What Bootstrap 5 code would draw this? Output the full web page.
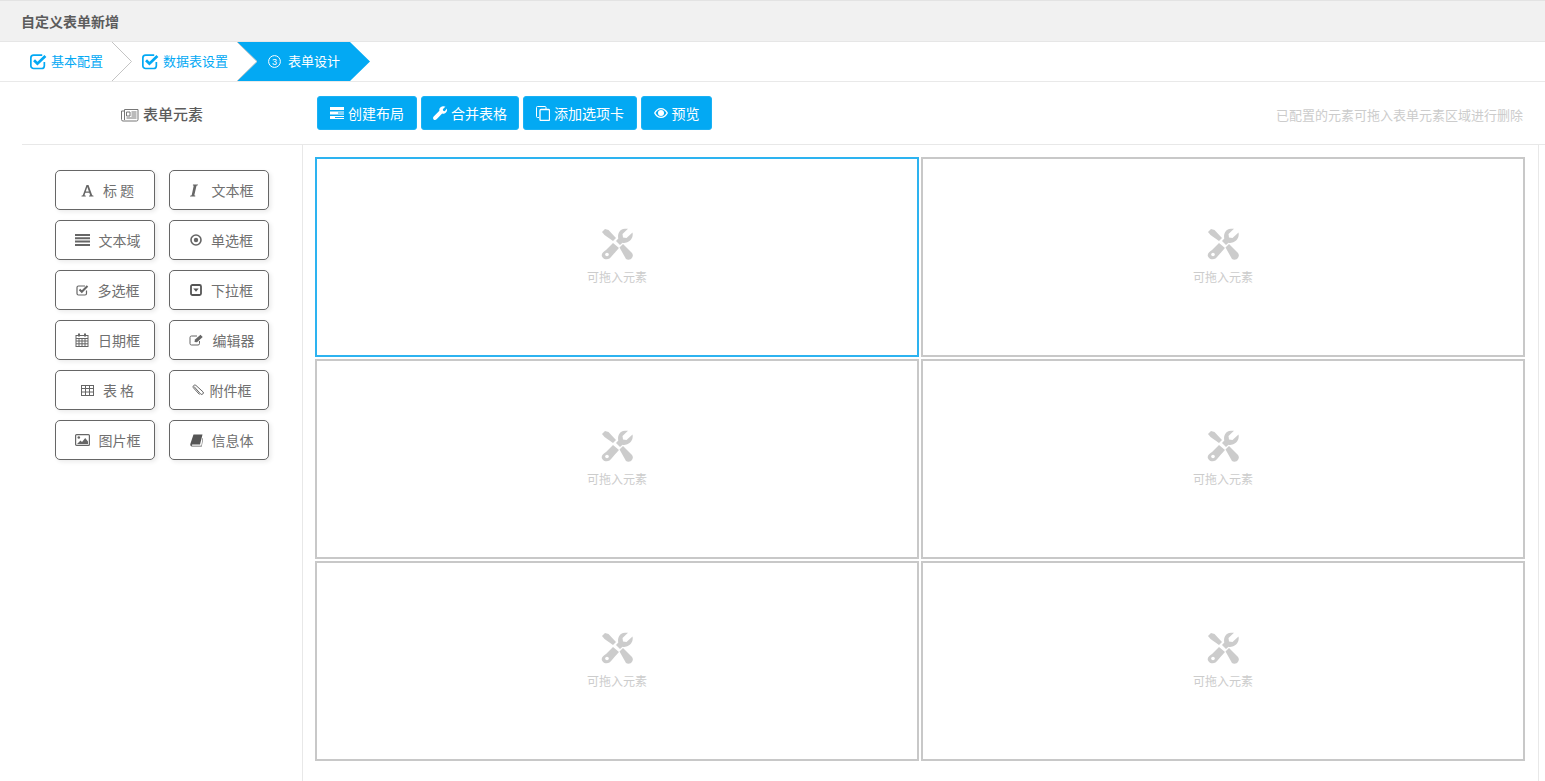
<!doctype html>
<html lang="zh">
<head>
<meta charset="utf-8">
<title>自定义表单新增</title>
<link rel="stylesheet" href="https://cdn.jsdelivr.net/npm/bootstrap@5.3.0/dist/css/bootstrap.min.css">
<style>
html,body{height:100%;overflow:hidden}
body{font-family:"Noto Sans CJK SC","Liberation Sans",sans-serif;color:#666;background:#fff;font-size:13px}
.pg-head{height:42px;background:#f1f1f1;border-top:1px solid #e3e3e3;border-bottom:1px solid #e6e6e6;padding-left:21px;font-size:14px;font-weight:700;color:#5c5c5c;line-height:41px}
.steps{height:40px;border-bottom:1px solid #e9e9e9}
.stp{position:relative;height:38px;font-size:13px;color:#03a9f4;gap:4px}
.stp-a{width:112px;padding-left:30px}
.stp-b{width:125px;padding-left:30px}
.stp-c{width:133px;padding-left:31px;color:#fff;gap:7px}
.stp-bg{position:absolute;left:0;top:0}
.stp>span,.stp>.ic{position:relative}
.tools{height:63px;border-bottom:1px solid #e8e8e8;margin-left:22px}
.ttl{width:295px;padding:3px 0 0 99px;font-size:15px;font-weight:500;color:#5c5c5c;gap:4px;border:0}
.tbtn{height:34px;border-radius:3px;background:#03a9f3;color:#fff;font-size:14px;padding:0;gap:4px;border:1px solid #1ab1f4}
.tbtn:hover{background:#03a9f3;color:#fff}
.hint{color:#ccc;font-size:13px;padding:3px 22px 0 0}
.work{height:636px;margin-left:22px}
.side{width:281px;border-right:1px solid #e8e8e8;padding:25px 0 0 33px}
.pal{display:grid;grid-template-columns:100px 100px;grid-auto-rows:40px;gap:10px 14px}
.pbtn{border:1px solid #666;border-radius:5px;box-shadow:2px 2px 4px rgba(0,0,0,.08);background:#fff;color:#707070;font-size:14px;padding:0 0 0 5px;gap:9px;line-height:1}
.pbtn:hover{background:#fff;color:#707070;border-color:#666}
.canvas{width:1236px;border-right:1px solid #e8e8e8;padding:12px 0 0 12px}
.cells{display:grid;grid-template-columns:604px 604px;grid-auto-rows:200px;gap:2px}
.cell{border:2px solid #c8c8c8;color:#ccc;font-size:12px;padding-top:69px}
.cell.on{border-color:#2db3f0}
.cell span{margin-top:8px;line-height:18px}
.ic{flex:none;display:block}
</style>
</head>
<body>
<svg width="0" height="0" class="position-absolute">
<defs>
<symbol id="chk" viewBox="0 0 16 16"><path d="M13.500 8.400v3.600A2.600 2.600 0 0 1 10.900 14.600H3.400A2.600 2.600 0 0 1 .8 12V4.600A2.600 2.600 0 0 1 3.400 2H11.500" fill="none" stroke="currentColor" stroke-width="1.600"/><path d="M3.800 6.800 7 10 14.500 2.800" fill="none" stroke="currentColor" stroke-width="2.600"/></symbol>
<symbol id="tool" viewBox="0 0 32 32"><path d="M1 4 4 1 7.500 2 15 10 12 13 3.500 7Z" fill="currentColor"/><path d="M12 15 5 22C2 24 0 26 1 28.500 2.500 31.500 6 32 8.500 30.500 9.500 30 16 22 18 20Z" fill="currentColor"/><circle cx="6" cy="26.500" r="1.800" fill="#fff"/><path d="M22 1C25 .5 27 .8 27 .8L21.500 6 22 9.500 25.500 10 31.500 4.500C32.500 9 30 13 25.500 14.500 24 15 22.500 15 21.500 14.700L19 17 15 13 17.300 10.500C16.300 6.500 18.500 2 22 1Z" fill="currentColor"/><path d="M18.500 19.500 22 16 31 25C32.300 27 32 29 30.500 30.500 29 32 26.500 32 25 31Z" fill="currentColor"/></symbol>
</defs>
</svg>

<div class="pg-head">自定义表单新增</div>

<div class="steps d-flex">
  <div class="stp stp-a d-flex align-items-center">
    <svg class="stp-bg" width="134" height="40" viewBox="0 0 134 40"><path d="M112 0 131.500 19.500 112 39" fill="none" stroke="#c4c4c4"/></svg>
    <svg class="ic" width="17" height="17"><use href="#chk"/></svg><span>基本配置</span>
  </div>
  <div class="stp stp-b d-flex align-items-center">
    <svg class="ic" width="17" height="17"><use href="#chk"/></svg><span>数据表设置</span>
  </div>
  <div class="stp stp-c d-flex align-items-center">
    <svg class="stp-bg" width="134" height="40" viewBox="0 0 134 40"><path d="M0 0H113L133 19.500 113 39H0L20 19.500Z" fill="#03a9f3"/><path d="M0 0 20 19.500 0 39" fill="none" stroke="#c8c8c8"/></svg>
    <svg class="ic" width="13" height="13" viewBox="0 0 13 13"><circle cx="6.500" cy="6.500" r="5.900" fill="none" stroke="#fff"/><text x="6.500" y="9.800" text-anchor="middle" fill="#fff" font-size="9" font-family="Liberation Sans">3</text></svg><span>表单设计</span>
  </div>
</div>

<div class="tools d-flex align-items-center">
  <div class="ttl d-flex align-items-center">
    <svg class="ic" width="18" height="14" viewBox="0 0 18 14"><path d="M3.500 1.500H17V11.500A1.500 1.500 0 0 1 15.500 13H2A1.500 1.500 0 0 1 .5 11.500V3H3.500Z" fill="none" stroke="#777"/><path d="M3.500 2V12" stroke="#777"/><path d="M5.500 4H9V8H5.500ZM10.500 4H15.500M10.500 6H15.500M10.500 8H15.500M5.500 10H15.500" fill="none" stroke="#777"/></svg>
    <span>表单元素</span>
  </div>
  <div class="d-flex gap-1 flex-grow-1 align-items-center">
    <button type="button" class="btn tbtn d-flex align-items-center justify-content-center" style="width:100px">
      <svg class="ic" width="14" height="12" viewBox="0 0 14 12" fill="#fff"><path d="M0 0H14V3H0ZM0 4.500H14V7.500H0ZM0 9H14V12H0Z"/><path d="M8 5.500H14V6.500H8ZM5 10H14V11H5Z" fill="#03a9f3"/></svg>创建布局</button>
    <button type="button" class="btn tbtn d-flex align-items-center justify-content-center" style="width:98px">
      <svg class="ic" width="14" height="14" viewBox="0 0 14 14" fill="#fff"><path d="M9.800.2C11 0 12 .3 12.500.6L9.800 3.200 10.200 4.800 11.700 5.200 14 2.500C14.400 4.500 13.600 6.800 11.500 7.500 10.600 7.800 9.800 7.700 9.200 7.500L3.600 13.300C2.700 14.200 1.400 14.200.6 13.400-.2 12.500-.1 11.200.7 10.400L6.400 4.800C5.800 2.500 7.500.5 9.800.2Z"/></svg>合并表格</button>
    <button type="button" class="btn tbtn d-flex align-items-center justify-content-center" style="width:114px">
      <svg class="ic" width="14" height="15" viewBox="0 0 14 15" fill="none" stroke="#fff"><path d="M3 11.500H1.500A1 1 0 0 1 .5 10.500V1.500A1 1 0 0 1 1.500.5H9A1 1 0 0 1 10 1.500V3"/><rect x="4" y="3.500" width="9.500" height="11" rx="1" stroke-width="1.300"/></svg>添加选项卡</button>
    <button type="button" class="btn tbtn d-flex align-items-center justify-content-center" style="width:71px">
      <svg class="ic" width="14" height="10" viewBox="0 0 14 10" fill="#fff"><path d="M7 0C10 0 12.700 2 14 5 12.700 8 10 10 7 10S1.300 8 0 5C1.300 2 4 0 7 0ZM1.500 5C2.700 7.200 4.700 8.800 7 8.800S11.300 7.200 12.500 5C11.300 2.800 9.300 1.200 7 1.200S2.700 2.800 1.500 5Z"/><circle cx="7" cy="5" r="3"/></svg>预览</button>
  </div>
  <div class="hint">已配置的元素可拖入表单元素区域进行删除</div>
</div>

<div class="work d-flex">
  <div class="side">
    <div class="pal">
      <button type="button" class="btn pbtn d-flex align-items-center justify-content-center">
        <svg class="ic" width="13" height="13" viewBox="0 0 13 13" fill="#666"><path d="M5.500 1H7.500L11.200 11.300 12.500 11.700V12.500H8V11.700L9.200 11.300 8.300 8.700H4.400L3.500 11.300 4.800 11.700V12.500H.5V11.700L1.800 11.300ZM6.300 3 4.800 7.500H7.900Z"/></svg>
        <span>标&nbsp;题</span></button>
      <button type="button" class="btn pbtn d-flex align-items-center justify-content-center" style="gap:14px">
        <svg class="ic" width="8" height="13" viewBox="0 0 8 13" fill="#666"><path d="M3 .5H8L7.800 1.300 6.500 1.700 4.300 11.300 5.400 11.700 5.200 12.500H0L.2 11.700 1.700 11.300 3.700 1.700 2.800 1.300Z"/></svg>
        <span>文本框</span></button>

      <button type="button" class="btn pbtn d-flex align-items-center justify-content-center">
        <svg class="ic" width="15" height="12" viewBox="0 0 15 12" fill="#666"><path d="M0 0H15V2H0ZM0 3.300H15V5.300H0ZM0 6.600H15V8.600H0ZM0 9.900H15V11.900H0Z"/></svg>
        <span>文本域</span></button>
      <button type="button" class="btn pbtn d-flex align-items-center justify-content-center">
        <svg class="ic" width="12" height="12" viewBox="0 0 12 12"><circle cx="6" cy="6" r="5" fill="none" stroke="#666" stroke-width="1.600"/><circle cx="6" cy="6" r="2.200" fill="#666"/></svg>
        <span>单选框</span></button>

      <button type="button" class="btn pbtn d-flex align-items-center justify-content-center">
        <svg class="ic" width="13" height="12" viewBox="0 0 13 12" fill="none" stroke="#666"><path d="M10.500 6.500V9.500A1.500 1.500 0 0 1 9 11H2.500A1.500 1.500 0 0 1 1 9.500V3.500A1.500 1.500 0 0 1 2.500 2H9" stroke-width="1.200"/><path d="M3.500 5.500 5.800 7.800 11.500 2" stroke-width="2"/></svg>
        <span>多选框</span></button>
      <button type="button" class="btn pbtn d-flex align-items-center justify-content-center">
        <svg class="ic" width="12" height="12" viewBox="0 0 12 12"><rect x="1" y="1" width="10" height="10" rx="1.500" fill="none" stroke="#555" stroke-width="1.800"/><path d="M3.300 4.500H8.700L6 7.700Z" fill="#555"/></svg>
        <span>下拉框</span></button>

      <button type="button" class="btn pbtn d-flex align-items-center justify-content-center">
        <svg class="ic" width="14" height="14" viewBox="0 0 14 14" fill="none" stroke="#666"><rect x="1" y="2.500" width="12" height="11"/><path d="M1 5.500H13M1 8H13M1 10.800H13M4 5.500V13.500M7 5.500V13.500M10 5.500V13.500"/><path d="M4 .5V3.500M10 .5V3.500" stroke-width="2"/></svg>
        <span>日期框</span></button>
      <button type="button" class="btn pbtn d-flex align-items-center justify-content-center">
        <svg class="ic" width="15" height="12" viewBox="0 0 15 12" fill="none" stroke="#666"><path d="M10.500 7V9.500A1.500 1.500 0 0 1 9 11H2.500A1.500 1.500 0 0 1 1 9.500V3.500A1.500 1.500 0 0 1 2.500 2H8"/><path d="M5.500 8 6 5.500 11.500.8 13.700 3 8 8.300Z" fill="#666" stroke="none"/></svg>
        <span>编辑器</span></button>

      <button type="button" class="btn pbtn d-flex align-items-center justify-content-center">
        <svg class="ic" width="13" height="11" viewBox="0 0 13 11" fill="none" stroke="#666"><rect x=".5" y=".5" width="12" height="10"/><path d="M.5 3.500H12.500M.5 7H12.500M4.500 .5V10.500M8.500 .5V10.500"/></svg>
        <span>表&nbsp;格</span></button>
      <button type="button" class="btn pbtn d-flex align-items-center justify-content-center" style="gap:6px">
        <svg class="ic" width="12" height="13" viewBox="0 0 12 13" fill="none" stroke="#666"><path d="M2 2.500 8.800 10.200A1.700 1.700 0 0 0 11.200 8L3.800 1.300A1.800 1.800 0 0 0 1.300 3.700L7.500 10.500"/></svg>
        <span>附件框</span></button>

      <button type="button" class="btn pbtn d-flex align-items-center justify-content-center">
        <svg class="ic" width="15" height="12" viewBox="0 0 15 12"><rect x=".6" y=".6" width="13.800" height="10.800" rx="1" fill="none" stroke="#666" stroke-width="1.200"/><circle cx="3.800" cy="3.500" r="1.300" fill="#666"/><path d="M2 10 5.500 6.500 7 8 10.200 4 13 7.500V10Z" fill="#666"/></svg>
        <span>图片框</span></button>
      <button type="button" class="btn pbtn d-flex align-items-center justify-content-center">
        <svg class="ic" width="13" height="13" viewBox="0 0 13 13" fill="#555"><path d="M3.500 .5H12.500L10 10.500H2.500C1.500 10.500 1.500 11.800 2.500 11.800H11.500L12.500 4 13 4.500 11.800 12.500H2C.5 12.500 0 11 .4 9.800Z"/></svg>
        <span>信息体</span></button>
    </div>
  </div>
  <div class="canvas">
    <div class="cells">
      <div class="cell on d-flex flex-column align-items-center"><svg class="ic" width="32" height="32"><use href="#tool"/></svg><span>可拖入元素</span></div>
      <div class="cell d-flex flex-column align-items-center"><svg class="ic" width="32" height="32"><use href="#tool"/></svg><span>可拖入元素</span></div>
      <div class="cell d-flex flex-column align-items-center"><svg class="ic" width="32" height="32"><use href="#tool"/></svg><span>可拖入元素</span></div>
      <div class="cell d-flex flex-column align-items-center"><svg class="ic" width="32" height="32"><use href="#tool"/></svg><span>可拖入元素</span></div>
      <div class="cell d-flex flex-column align-items-center"><svg class="ic" width="32" height="32"><use href="#tool"/></svg><span>可拖入元素</span></div>
      <div class="cell d-flex flex-column align-items-center"><svg class="ic" width="32" height="32"><use href="#tool"/></svg><span>可拖入元素</span></div>
    </div>
  </div>
</div>
<script src="https://cdn.jsdelivr.net/npm/bootstrap@5.3.0/dist/js/bootstrap.bundle.min.js"></script>
</body>
</html>
